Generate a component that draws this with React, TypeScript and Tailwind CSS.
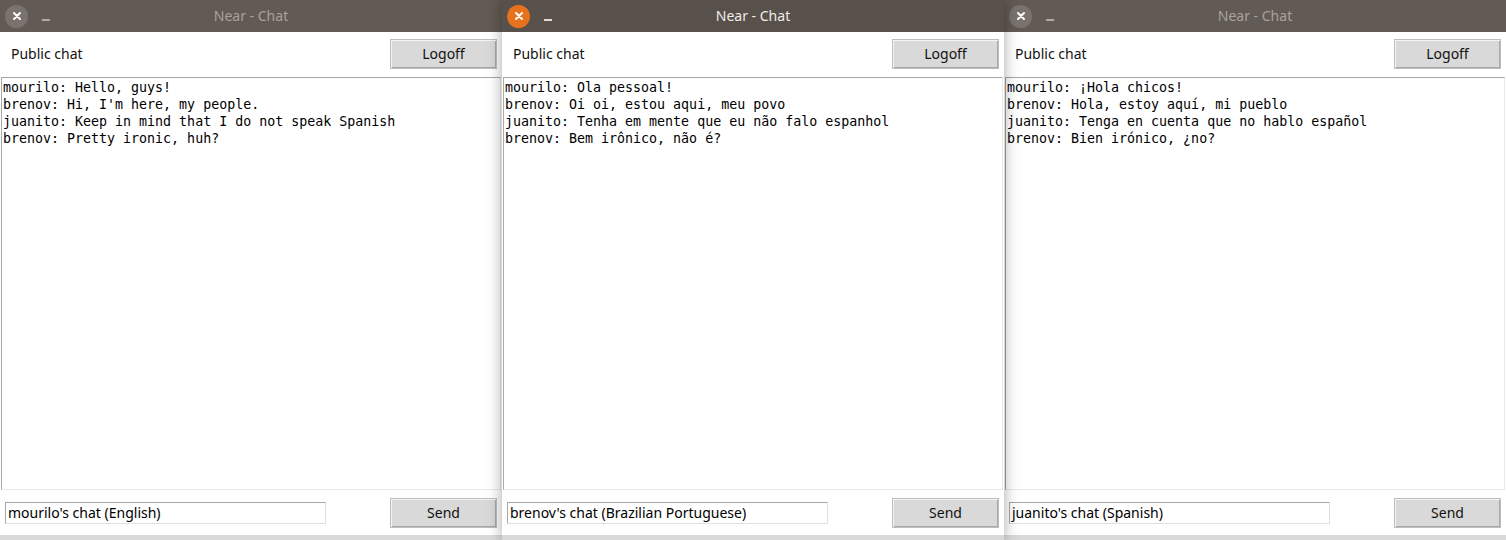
import React from "react";

type Win = {
  active: boolean;
  lines: string[];
  entry: string;
};

const wins: Win[] = [
  {
    active: false,
    lines: [
      "mourilo: Hello, guys!",
      "brenov: Hi, I'm here, my people.",
      "juanito: Keep in mind that I do not speak Spanish",
      "brenov: Pretty ironic, huh?",
    ],
    entry: "mourilo's chat (English)",
  },
  {
    active: true,
    lines: [
      "mourilo: Ola pessoal!",
      "brenov: Oi oi, estou aqui, meu povo",
      "juanito: Tenha em mente que eu não falo espanhol",
      "brenov: Bem irônico, não é?",
    ],
    entry: "brenov's chat (Brazilian Portuguese)",
  },
  {
    active: false,
    lines: [
      "mourilo: ¡Hola chicos!",
      "brenov: Hola, estoy aquí, mi pueblo",
      "juanito: Tenga en cuenta que no hablo español",
      "brenov: Bien irónico, ¿no?",
    ],
    entry: "juanito's chat (Spanish)",
  },
];

function Btn({ label }: { label: string }) {
  return (
    <div className="w-[107px] h-[30px] bg-[#d9d9d9] border border-[#bdbdbd] shadow-[inset_1px_1px_0_#f4f4f4,inset_-1px_-1px_0_#a8a8a8] flex items-center justify-center pb-[2px] text-[14px] text-[#111]">
      {label}
    </div>
  );
}

function Window({ w }: { w: Win }) {
  return (
    <div
      className={
        "w-[502px] h-[540px] flex flex-col shrink-0 bg-white " +
        (w.active ? "relative z-10 shadow-[0_0_14px_rgba(0,0,0,0.35)]" : "")
      }
      style={{ fontFamily: '"Noto Sans", "Open Sans", sans-serif' }}
    >
      <div
        className={
          "h-[32px] flex items-center relative shrink-0 " +
          (w.active ? "bg-[#58504a]" : "bg-[#625a54]")
        }
      >
        <div
          className={
            "ml-[5px] w-[23px] h-[23px] rounded-full flex items-center justify-center " +
            (w.active ? "bg-[#e8711e]" : "bg-[#7a726c]")
          }
        >
          <svg width="10" height="10" viewBox="0 0 10 10">
            <path d="M2 2 L8 8 M8 2 L2 8" stroke="#ffffff" strokeWidth="2" strokeLinecap="round" />
          </svg>
        </div>
        <div
          className={
            "ml-[14px] mt-[8px] w-[8px] h-[2px] " +
            (w.active ? "bg-[#e0dcd8]" : "bg-[#b0aaa5]")
          }
        />
        <div
          className={
            "absolute inset-0 flex items-center justify-center pb-[2px] text-[14px] " +
            (w.active ? "text-[#f0ece8]" : "text-[#a8a29d]")
          }
        >
          Near - Chat
        </div>
      </div>
      <div className="flex justify-between pl-[11px] pr-[5px] pt-[7px] h-[45px] items-start">
        <span className="text-[14px] text-[#111] mt-[4px]">Public chat</span>
        <Btn label="Logoff" />
      </div>
      <div
        className="mx-[1px] h-[413px] border border-[#a8a8a8] border-r-[#e8e8e8] border-b-[#e8e8e8] bg-white pl-[1px] pt-[1px] text-[13.3px] leading-[17px] text-black whitespace-pre"
        style={{ fontFamily: '"DejaVu Sans Mono", monospace' }}
      >
        {w.lines.map((l, i) => (
          <div key={i}>{l}</div>
        ))}
      </div>
      <div className="h-[45px] flex items-start justify-between pl-[5px] pr-[5px] pt-[8px]">
        <div className="mt-[4px] w-[321px] h-[22px] border border-[#a8a8a8] border-r-[#e0e0e0] border-b-[#e0e0e0] flex items-center pl-[2px] pb-[1px] text-[14px] text-black">
          {w.entry}
        </div>
        <Btn label="Send" />
      </div>
      <div className="flex-1 bg-[#d9d9d9]" />
    </div>
  );
}

export default function App() {
  return (
    <div className="w-[1506px] h-[540px] flex overflow-hidden bg-[#d9d9d9]">
      {wins.map((w, i) => (
        <Window key={i} w={w} />
      ))}
    </div>
  );
}
